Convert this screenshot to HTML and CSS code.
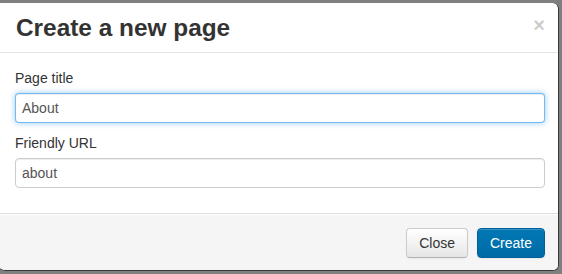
FILE: index.html
```html
<!DOCTYPE html>
<html lang="en">
<head>
  <meta charset="UTF-8" />
  <title>Create a new page</title>
  <link rel="stylesheet" href="styles.css">
</head>
<body>
<div class="modal">
  <div class="modal-header">
    <button class="close">&times;</button>
    <h3>Create a new page</h3>
  </div>
  <div class="modal-body">
    <label>Page title</label>
    <input class="focused" value="About" />
    <label>Friendly URL</label>
    <input value="about" />
  </div>
  <div class="modal-footer">
    <button class="btn">Close</button>
    <button class="btn btn-primary">Create</button>
  </div>
</div>
</body>
</html>
```

FILE: styles.css
```css
body { margin: 0; background: #7f7f7f; font-family: "Liberation Sans", Arial, sans-serif; font-size: 14px; line-height: 20px; color: #333; }
.modal { margin: 3px 0 0 -1px; width: 559px; background: #fff; border-right: 1px solid #3a3a3a; border-bottom: 1px solid #3a3a3a; border-radius: 0 6px 6px 6px; overflow: hidden; }
.modal-header { padding: 10px 15px 9px 17px; border-bottom: 1px solid #e5e5e5; }
.modal-header h3 { margin: 0; font-size: 24.4px; line-height: 30px; font-weight: bold; color: #333; }
.close { float: right; margin: 2px -2px 0 0; padding: 0; background: none; border: none; font-family: inherit; font-size: 20px; font-weight: bold; line-height: 20px; color: #000; opacity: .2; }
.modal-body { padding: 15px 14px 15px 16px; }
label { display: block; margin-bottom: 5px; }
input { display: block; box-sizing: border-box; width: 530px; height: 30px; margin-bottom: 10px; padding: 4px 6px; border: 1px solid #ccc; border-radius: 4px; font-family: inherit; font-size: 14px; color: #555; box-shadow: inset 0 1px 1px rgba(0,0,0,.075); outline: none; }
input.focused { border-color: rgba(82,168,236,.8); box-shadow: inset 0 1px 1px rgba(0,0,0,.075), 0 0 6px rgba(82,168,236,.6); }
.modal-footer { display: flex; justify-content: flex-end; gap: 9px; padding: 14px 13px 12px; height: 30px; background: #f5f5f5; border-top: 1px solid #ddd; box-shadow: inset 0 1px 0 #fff; }
.btn { height: 30px; padding: 4px 12px; font-family: inherit; font-size: 14px; line-height: 20px; color: #333; background: linear-gradient(#fff, #e6e6e6); border: 1px solid #ccc; border-bottom-color: #b3b3b3; border-radius: 4px; box-shadow: inset 0 1px 0 rgba(255,255,255,.2), 0 1px 2px rgba(0,0,0,.05); }
.btn-primary { color: #fff; background: linear-gradient(#0078b5, #006ba6); border-color: #00609a; }
```
